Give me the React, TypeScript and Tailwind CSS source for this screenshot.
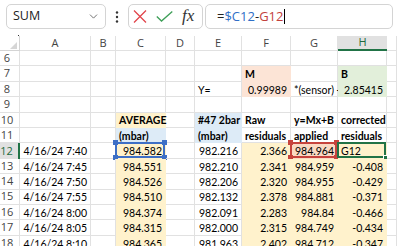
import React from "react";
import { ChevronDown } from "lucide-react";

const GRID = "border-[#e1e1e1]";
const YEL = "bg-[#fff2cc] border-[#fff2cc]";
const BLU = "bg-[#ddebf7] border-[#ddebf7]";
const ORG = "bg-[#fce4d6] border-[#fce4d6]";
const GRN = "bg-[#e2efda] border-[#e2efda]";

type Cell = { t?: string; r?: boolean; b?: boolean; fill?: string; sel?: "blue" | "red" | "active" };

const cols = ["A", "B", "C", "D", "E", "F", "G", "H", ""];

const data = [
  ["4/16/24 7:40", "984.582", "982.216", "2.366", "984.964", "G12"],
  ["4/16/24 7:45", "984.551", "982.210", "2.341", "984.959", "-0.408"],
  ["4/16/24 7:50", "984.526", "982.206", "2.320", "984.955", "-0.429"],
  ["4/16/24 7:55", "984.510", "982.132", "2.378", "984.881", "-0.371"],
  ["4/16/24 8:00", "984.374", "982.091", "2.283", "984.84", "-0.466"],
  ["4/16/24 8:05", "984.315", "982.000", "2.315", "984.749", "-0.434"],
  ["4/16/24 8:10", "984.365", "981.963", "2.402", "984.712", "-0.347"],
];

function buildRows(): { n: number; cells: Cell[] }[] {
  const rows: { n: number; cells: Cell[] }[] = [];
  const blank = (): Cell[] => Array.from({ length: 9 }, () => ({}));
  rows.push({ n: 6, cells: blank() });
  const r7 = blank();
  r7[5] = { t: "M", b: true, fill: ORG };
  r7[7] = { t: "B", b: true, fill: GRN };
  rows.push({ n: 7, cells: r7 });
  const r8 = blank();
  r8[4] = { t: "Y=" };
  r8[5] = { t: "0.99989", r: true, fill: ORG };
  r8[6] = { t: "*(sensor) +" };
  r8[7] = { t: "2.85415", r: true, fill: GRN };
  rows.push({ n: 8, cells: r8 });
  rows.push({ n: 9, cells: blank() });
  const r10 = blank();
  r10[2] = { t: "AVERAGE", b: true, fill: YEL };
  r10[4] = { t: "#47 2bar", b: true, fill: BLU };
  r10[5] = { t: "Raw", b: true };
  r10[6] = { t: "y=Mx+B", b: true };
  r10[7] = { t: "corrected", b: true };
  rows.push({ n: 10, cells: r10 });
  const r11 = blank();
  r11[2] = { t: "(mbar)", b: true, fill: BLU };
  r11[4] = { t: "(mbar)", b: true, fill: BLU };
  r11[5] = { t: "residuals", b: true };
  r11[6] = { t: "applied", b: true };
  r11[7] = { t: "residuals", b: true };
  rows.push({ n: 11, cells: r11 });
  data.forEach((d, i) => {
    const c = blank();
    c[0] = { t: d[0], r: true };
    c[2] = { t: d[1], r: true, fill: YEL, sel: i === 0 ? "blue" : undefined };
    c[4] = { t: d[2], r: true };
    c[5] = { t: d[3], r: true, fill: YEL };
    c[6] = i === 0 ? { t: d[4], r: true, fill: "bg-[#fad9c3] border-[#fad9c3]", sel: "red" } : { t: d[4], r: true, fill: YEL };
    c[7] = i === 0 ? { t: d[5], fill: YEL, sel: "active" } : { t: d[5], r: true, fill: YEL };
    rows.push({ n: 12 + i, cells: c });
  });
  return rows;
}

function RefBox({ color }: { color: "blue" | "red" }) {
  const border = color === "blue" ? "border-[#3d6fc6]" : "border-[#c6433d]";
  const dot = color === "blue" ? "bg-[#3d6fc6]" : "bg-[#c6433d]";
  return (
    <div className={`absolute -left-[1px] -top-[1px] -right-[0px] bottom-[0px] border-2 ${border} pointer-events-none`}>
      <div className={`absolute -left-[4px] -top-[4px] w-[5px] h-[5px] ${dot}`} />
      <div className={`absolute -right-[4px] -top-[4px] w-[5px] h-[5px] ${dot}`} />
      <div className={`absolute -left-[4px] -bottom-[4px] w-[5px] h-[5px] ${dot}`} />
      <div className={`absolute -right-[4px] -bottom-[4px] w-[5px] h-[5px] ${dot}`} />
    </div>
  );
}

export default function App() {
  const rows = buildRows();
  return (
    <div className="w-[397px] h-[246px] bg-white overflow-hidden font-['Lato',sans-serif] text-black">
      {/* formula bar */}
      <div className="h-[36px] pt-[4px] pl-[6px] flex items-start font-['Open_Sans',sans-serif]">
        <div className="w-[100px] h-[25px] border border-[#d4d4d4] rounded-[5px] flex items-center justify-between pl-[6px] pr-[5px]">
          <span className="text-[12.5px] text-[#222]">SUM</span>
          <ChevronDown className="w-[13px] h-[13px] text-[#555]" strokeWidth={1.5} />
        </div>
        <div className="w-[22px] h-[25px] flex items-center justify-center">
          <svg width="4" height="12" viewBox="0 0 4 12">
            <circle cx="2" cy="1.5" r="1.2" fill="#333" />
            <circle cx="2" cy="6" r="1.2" fill="#333" />
            <circle cx="2" cy="10.5" r="1.2" fill="#333" />
          </svg>
        </div>
        <div className="w-[75px] h-[25px] border border-[#d4d4d4] rounded-[5px] flex items-center pl-[4px] gap-[9px]">
          <svg width="14" height="13" viewBox="0 0 14 13">
            <path d="M1 0.5 L13 12.5 M13 0.5 L1 12.5" stroke="#e2454b" strokeWidth="1.3" fill="none" />
          </svg>
          <svg width="17" height="11" viewBox="0 0 17 11">
            <path d="M0.8 5.5 L5.5 10 L16.3 0.6" stroke="#3e9f58" strokeWidth="1.3" fill="none" />
          </svg>
          <span className="font-['Liberation_Serif',serif] italic text-[17px] text-[#333] leading-none -mt-[2px]">fx</span>
        </div>
        <div className="ml-[2px] w-[188px] h-[25px] border border-[#d4d4d4] rounded-[5px] flex items-center pl-[11px] text-[13px]">
          <span className="text-[#222]">=</span>
          <span className="text-[#2f6fc7]">$C12</span>
          <span className="text-[#222]">-</span>
          <span className="text-[#c2413b]">G12</span>
          <span className="w-[1px] h-[15px] bg-black ml-[1px]" />
        </div>
      </div>

      {/* sheet */}
      <div className="grid grid-cols-[20px_71px_25px_50px_29px_47px_49px_47px_49px_10px] text-[10.5px]">
        {/* header row */}
        <div className="h-[15px] border-r border-b border-[#d4d4d4] relative">
          <div className="absolute right-[0px] -top-[1px] w-[1px] h-[1px] bg-[#333]" />
          <svg className="absolute left-[10px] top-[6px]" width="7" height="7" viewBox="0 0 7 7">
            <path d="M7 0 L7 7 L0 7 Z" fill="#d6d6d6" />
          </svg>
        </div>
        {cols.map((c, i) =>
          c === "H" ? (
            <div key={i} className="h-[15px] bg-[#e1e1e1] border-b-2 border-[#217346] flex items-center justify-center text-[11px] text-[#1e6b40] font-['Open_Sans',sans-serif]">
              {c}
            </div>
          ) : (
            <div key={i} className="h-[15px] border-r border-b border-[#e1e1e1] flex items-center justify-center text-[11px] text-[#444] font-['Open_Sans',sans-serif]">
              {c}
            </div>
          )
        )}

        {rows.map((row) => (
          <React.Fragment key={row.n}>
            {row.n === 12 ? (
              <div className="h-[15.4px] bg-[#e1e1e1] border-r-2 border-[#217346] flex items-center justify-center pr-[5px] text-[11px] text-[#1e6b40] font-['Open_Sans',sans-serif]">
                {row.n}
              </div>
            ) : (
              <div className="h-[15.4px] border-r border-b border-[#e1e1e1] flex items-center justify-center pr-[5px] text-[11px] text-[#444] font-['Open_Sans',sans-serif]">
                {row.n}
              </div>
            )}
            {row.cells.map((c, j) => (
              <div
                key={j}
                className={`h-[15.4px] border-r border-b ${c.fill ?? GRID} relative flex items-end pb-[1px] px-[3px] whitespace-nowrap overflow-visible ${c.r ? "justify-end" : "justify-start"} ${c.b ? "font-bold" : ""} ${j === 6 ? "overflow-hidden" : ""}`}
              >
                <span className="leading-none">{c.t}</span>
                {c.sel === "blue" && <RefBox color="blue" />}
                {c.sel === "red" && <RefBox color="red" />}
                {c.sel === "active" && (
                  <div className="absolute -left-[1px] -top-[1px] -right-[0px] bottom-[0px] border-2 border-[#217346]">
                    <div className="absolute -right-[4px] -bottom-[4px] w-[5px] h-[5px] bg-[#217346] border border-white" />
                  </div>
                )}
              </div>
            ))}
          </React.Fragment>
        ))}
      </div>
    </div>
  );
}
